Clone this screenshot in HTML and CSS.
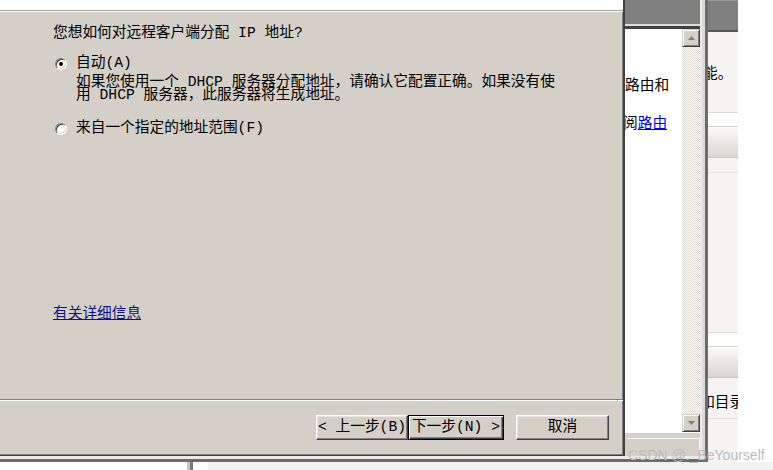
FILE: index.html
```html
<!DOCTYPE html>
<html lang="zh-CN">
<head>
  <meta charset="UTF-8" />
  <title>IP 地址指定</title>
  <link rel="stylesheet" href="styles.css">
</head>
<body>

<div class="screen">
  <div class="app">
    <div class="app-in">

      <!-- wizard dialog -->
      <div class="dialog">
        <div class="dlg-head"></div>
        <div class="dlg-body">
          <div class="question">您想如何对远程客户端分配 IP 地址?</div>
          <label class="option"><span class="radio on"></span>自动(A)</label>
          <div class="desc">如果您使用一个 DHCP 服务器分配地址，请确认它配置正确。如果没有使<br>用 DHCP 服务器，此服务器将生成地址。</div>
          <label class="option second"><span class="radio"></span>来自一个指定的地址范围(F)</label>
          <a class="more" href="#">有关详细信息</a>
        </div>
        <div class="dlg-foot">
          <button class="btn back">&lt; 上一步(B)</button>
          <button class="btn next default">下一步(N) &gt;</button>
          <button class="btn cancel">取消</button>
        </div>
      </div>

      <!-- window behind the dialog -->
      <div class="behind">
        <div class="bw-band"></div>
        <div class="bw-body">
          <div class="bw-text">
            <p class="l1">路由和</p>
            <p class="l2">阅<a href="#">路由</a></p>
          </div>
          <div class="scroll">
            <div class="sb-btn">
              <svg width="7" height="4" viewBox="0 0 7 4"><polygon points="3.5,0 7,4 0,4" fill="#808080"/></svg>
            </div>
            <div class="sb-track"></div>
            <div class="sb-btn">
              <svg width="7" height="4" viewBox="0 0 7 4"><polygon points="0,0 7,0 3.5,4" fill="#808080"/></svg>
            </div>
          </div>
        </div>
        <div class="bw-status"><div class="panel"></div></div>
      </div>

    </div>
  </div>

  <div class="side">
    <div class="sd-band"></div>
    <div class="sd-top"><p class="t1">能。</p></div>
    <div class="sd-sep"></div>
    <div class="sd-head"></div>
    <div class="sd-row"></div>
    <div class="sd-fill"></div>
    <div class="sd-sep"></div>
    <div class="sd-head"></div>
    <div class="sd-row tall"><p class="t2">如目录</p></div>
  </div>
</div>

<div class="taskbar">
  <div class="tb-left"></div>
  <div class="tb-grip"></div>
  <div class="tb-gap"></div>
  <div class="tb-rest"></div>
</div>

<div class="watermark">CSDN @._BeYourself</div>

</body>
</html>
```

FILE: styles.css
```css
:root {
  --face: #d4d0c8;
  --shadow: #808080;
  --dark: #404040;
  --panel: #f5f4f2;
}

* { box-sizing: border-box; }

body {
  margin: 0;
  width: 773px;
  height: 470px;
  overflow: hidden;
  background: #fff;
  position: relative;
  font-family: "Liberation Mono", "Noto Sans CJK SC", monospace;
  font-size: 14.7px;
  color: #000;
}

p { margin: 0; }

.screen {
  display: flex;
  height: 462px;
}

/* outer frame of the window behind */
.app {
  width: 708px;
  height: 462px;
  border-right: 3px solid #6c6c6c;
  border-bottom: 3px solid #6c6c6c;
}
.app-in {
  display: flex;
  height: 100%;
  border-right: 3px solid #dcdad6;
  border-bottom: 3px solid #ebeae6;
}

/* dialog */
.dialog {
  width: 624px;
  height: 456px;
  display: flex;
  flex-direction: column;
  background: var(--face);
  border-right: 1px solid var(--dark);
  border-bottom: 1px solid var(--dark);
  box-shadow: inset -1px -1px 0 var(--shadow);
}
.dlg-head {
  height: 12px;
  background: #fff;
  border-bottom: 1px solid #fff;
  box-shadow: inset 0 -1px 0 #a0a0a0;
}

.dlg-body {
  flex: 1;
  display: flex;
  flex-direction: column;
  align-items: flex-start;
  padding: 14px 0 0 53px;
  line-height: 15px;
  white-space: nowrap;
}
.option {
  display: flex;
  align-items: center;
  gap: 9px;
  margin: 15px 0 0 2px;
}
.option.second { margin-top: 19px; }

.radio {
  width: 12px;
  height: 12px;
  border-radius: 50%;
  background: #fff;
  border: 1px solid;
  border-color: var(--shadow) #fff #fff var(--shadow);
  box-shadow: inset 1px 1px 0 var(--dark), inset -1px -1px 0 var(--face);
  position: relative;
  flex: none;
}
.radio.on::after {
  content: "";
  position: absolute;
  left: 3px;
  top: 3px;
  width: 4px;
  height: 4px;
  border-radius: 50%;
  background: #000;
}

.desc {
  margin: 5px 0 0 23px;
  line-height: 13px;
}
.more {
  margin-top: auto;
  margin-bottom: 77px;
  color: #10108c;
}

.dlg-foot {
  height: 56px;
  display: flex;
  justify-content: flex-end;
  align-items: flex-start;
  padding: 15px 14px 0 0;
  border-top: 1px solid var(--shadow);
  box-shadow: inset 0 1px 0 #fff;
}
.btn {
  height: 25px;
  padding: 0;
  font: inherit;
  line-height: 15px;
  color: #000;
  background: var(--face);
  border: 1px solid;
  border-color: #fff var(--dark) var(--dark) #fff;
  box-shadow: inset -1px -1px 0 var(--shadow), inset 1px 1px 0 #e8e6e2;
}
.btn.back { width: 92px; }
.btn.next { width: 96px; }
.btn.cancel { width: 93px; margin-left: 12px; }
.btn.default {
  border-color: #000;
  box-shadow: inset 1px 1px 0 #fff, inset -1px -1px 0 var(--dark), inset -2px -2px 0 var(--shadow);
}

/* window behind */
.behind {
  width: 78px;
  display: flex;
  flex-direction: column;
  border-left: 1px solid var(--dark);
  border-right: 2px solid #ecebe8;
  background: var(--face);
}
.bw-band {
  height: 26px;
  background: var(--shadow);
  border-bottom: 2px solid #dcdcdc;
}
.bw-body {
  height: 406px;
  display: flex;
  border-top: 3px solid var(--dark);
}
.bw-text {
  flex: 1;
  background: #fff;
  overflow: hidden;
  white-space: nowrap;
  font-family: "Noto Sans CJK SC", sans-serif;
  line-height: 15px;
}
.bw-text .l1 { margin-top: 47px; }
.bw-text .l2 { margin: 23px 0 0 -2px; }
.bw-text a { color: #0000ff; }

.scroll {
  width: 18px;
  display: flex;
  flex-direction: column;
}
.sb-btn {
  height: 18px;
  display: flex;
  align-items: center;
  justify-content: center;
  background: var(--face);
  border: 1px solid;
  border-color: var(--face) var(--dark) var(--dark) var(--face);
  box-shadow: inset 1px 1px 0 #fff, inset -1px -1px 0 var(--shadow);
}
.sb-track {
  flex: 1;
  background: repeating-conic-gradient(#dcd9d3 0 25%, #fff 0 50%) 0 0 / 2px 2px;
}
.bw-status {
  flex: 1;
  border-top: 1px solid #fff;
  padding: 5px 0 3px 2px;
}
.bw-status .panel {
  height: 100%;
  border-top: 1px solid #f4f4f4;
  border-right: 1px solid #f4f4f4;
}

/* panel at the right */
.side {
  width: 30px;
  height: 462px;
  overflow: hidden;
  white-space: nowrap;
  background: var(--panel);
  font-family: "Noto Sans CJK SC", sans-serif;
  line-height: 15px;
}
.sd-band {
  height: 32px;
  background: var(--shadow);
  border-top: 1px solid #9a9a9a;
  border-bottom: 2px solid #555;
}
.sd-top {
  height: 80px;
  padding-top: 32px;
}
.sd-top .t1 { margin-left: -5px; }
.sd-sep {
  height: 15px;
  background: #fff;
  border-top: 1px solid #dcdad6;
  border-bottom: 1px solid #d6d4cf;
}
.sd-head {
  height: 31px;
  background: linear-gradient(#fbfbfa, #d8d6d1);
  border-bottom: 1px solid #c8c6c1;
}
.sd-row {
  height: 15px;
  border-bottom: 1px solid #e2e0dc;
}
.sd-row.tall {
  height: 41px;
  padding-top: 15px;
}
.sd-row .t2 { margin-left: -8px; }
.sd-fill { height: 159px; }

/* strip at the bottom */
.taskbar {
  display: flex;
  height: 8px;
}
.tb-left { width: 187px; }
.tb-grip {
  width: 6px;
  border-left: 3px solid #c4c4c4;
  background: #7a7a7a;
}
.tb-gap { width: 15px; }
.tb-rest { flex: 1; background: #f2f2f2; }

.watermark {
  position: absolute;
  left: 628px;
  top: 447px;
  font-family: "Liberation Sans", sans-serif;
  font-size: 14px;
  line-height: 16px;
  color: #bcbcbc;
}
```
